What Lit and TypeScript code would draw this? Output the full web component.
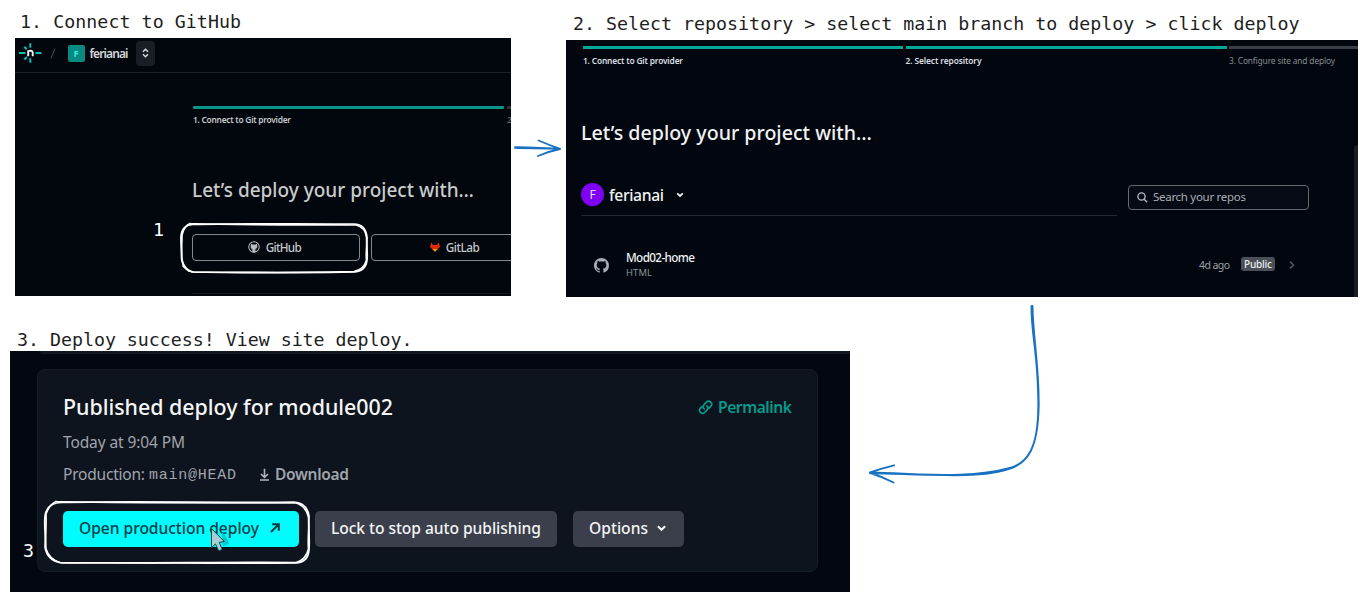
import { LitElement, html, css, svg } from "lit";
import { customElement, property } from "lit/decorators.js";

/** Text run whose tracking is adjusted so that it spans a given width. */
@customElement("fit-text")
class FitText extends LitElement {
  @property({ type: Number }) w = 0;
  @property() text = "";

  static styles = css`
    :host { display: block; flex: none; white-space: pre; }
    .run { display: inline-block; vertical-align: top; }
  `;

  updated() {
    const run = this.renderRoot.querySelector(".run") as HTMLElement;
    run.style.letterSpacing = "0px";
    const natural = run.getBoundingClientRect().width;
    const gaps = Math.max(1, this.text.length - 1);
    run.style.letterSpacing = `${(this.w - natural) / gaps}px`;
    this.style.width = `${this.w}px`;
  }

  render() {
    return html`<span class="run">${this.text}</span>`;
  }
}

const t = (text: string, w: number, cls = "") =>
  html`<fit-text class=${cls} .text=${text} .w=${w}></fit-text>`;

const octocat = svg`<path fill="currentColor" d="M8 0C3.58 0 0 3.58 0 8c0 3.54 2.29 6.53 5.47 7.59.4.07.55-.17.55-.38 0-.19-.01-.82-.01-1.49-2.01.37-2.53-.49-2.69-.94-.09-.23-.48-.94-.82-1.13-.28-.15-.68-.52-.01-.53.63-.01 1.08.58 1.23.82.72 1.21 1.87.87 2.33.66.07-.52.28-.87.51-1.07-1.78-.2-3.64-.89-3.64-3.95 0-.87.31-1.59.82-2.15-.08-.2-.36-1.02.08-2.12 0 0 .67-.21 2.2.82.64-.18 1.32-.27 2-.27s1.36.09 2 .27c1.53-1.04 2.2-.82 2.2-.82.44 1.1.16 1.92.08 2.12.51.56.82 1.27.82 2.15 0 3.07-1.87 3.75-3.65 3.95.29.25.54.73.54 1.48 0 1.07-.01 1.93-.01 2.2 0 .21.15.46.55.38A8.01 8.01 0 0 0 16 8c0-4.42-3.58-8-8-8z"/>`;

const base = css`
  :host { display: block; overflow: hidden; box-sizing: border-box; font-family: "Noto Sans", "Open Sans", sans-serif; font-weight: 500; }
  * { box-sizing: border-box; }
  svg { display: block; flex: none; }
  .row { display: flex; align-items: center; }
`;

@customElement("connect-panel")
class ConnectPanel extends LitElement {
  static styles = [base, css`
    :host { width: 496px; height: 258px; background: #02060d; color: #c6c9ca; }
    .top { height: 35px; padding: 0 0 4px 3.5px; border-bottom: 1px solid #1d2126; }
    .slash { margin-left: 8px; }
    .tile { width: 17px; height: 17px; margin-left: 12px; border-radius: 2px; background: #078a80; color: #35eee0; font-size: 8.5px; font-weight: 700; justify-content: center; }
    .team { font-size: 12px; line-height: 16px; margin: 1px 0 0 5px; color: #d5d8da; font-weight: 600; }
    .pick { width: 19px; height: 25px; margin-left: 7px; border-radius: 4px; background: #191d26; justify-content: center; }
    .body { padding-left: 177px; }
    .steps { display: grid; grid-template-columns: 311px 311px; gap: 3px; padding: 33px 0 0 1px; }
    .bar { height: 3px; margin-bottom: 5px; background: #07958a; border-radius: 1px; }
    .next { background: #2d3237; }
    .label { font-size: 8.4px; line-height: 12px; font-weight: 600; }
    .dim { color: #5c6265; }
    .title { font-size: 19px; line-height: 28px; margin-top: 50px; color: #c9cbcb; }
    .providers { display: flex; gap: 11px; margin-top: 30px; }
    .provider { flex: none; width: 168px; height: 27px; justify-content: center; gap: 5.5px; padding-bottom: 2px; border: 1px solid #84888b; border-radius: 4px; font-size: 11.7px; line-height: 16px; }
    .github { padding-right: 2px; }
    .end { height: 1px; margin-top: 32px; background: #14191e; }
  `];

  render() {
    return html`
      <div class="top row">
        <svg width="23" height="20" viewBox="0 0 23 20" fill="none">
          <path d="M0 10h6.500M16.500 10h6M11.300.3v4.500M11.300 15.200v4.500" stroke="#05bdb0" stroke-width="2"/>
          <path d="M5.300 3.800l2.400 2.400M5.300 16.500l2.600-2.600" stroke="#05bdb0" stroke-width="2.100"/>
          <path d="M9.200 13.200V7.300M9.200 8.200c2.200-.8 4.500-.8 4.500 1.300v3.700" stroke="#eef3f3" stroke-width="1.900"/>
        </svg>
        <svg class="slash" width="6" height="11"><path d="M5 .5 1 10.500" stroke="#4c5257"/></svg>
        <span class="tile row">F</span>
        ${t("ferianai", 39, "team")}
        <span class="pick row"><svg width="7" height="10" viewBox="0 0 7 10" fill="none" stroke="#d8dbde" stroke-width="1.500"><path d="M1 3.700l2.500-2.400L6 3.700M1 6.300l2.500 2.400L6 6.300"/></svg></span>
      </div>
      <div class="body">
        <div class="steps">
          <div><div class="bar"></div>${t("1. Connect to Git provider", 98, "label")}</div>
          <div><div class="bar next"></div>${t("2", 4, "label dim")}</div>
        </div>
        ${t("Let’s deploy your project with…", 282, "title")}
        <div class="providers">
          <div class="provider github row">
            <svg width="12" height="12" viewBox="-1.5 -1.5 19 19" color="#b9bcc0"><circle cx="8" cy="8" r="8.3" fill="none" stroke="currentColor" stroke-width="1.6"/><path fill="currentColor" d="M3.4 3l2.1 1h5l2.1-1 .6 3.4c.4 3-1 4.5-3 4.8l.2 5H5.7v-2.6l-2.5-1.3 2.4.1.3-1.2c-2.300-.3-3.500-1.900-3.100-4.800z"/></svg>
            ${t("GitHub", 36)}
          </div>
          <div class="provider row">
            <svg width="10" height="10" viewBox="0 0 10 10"><path fill="#e2280a" d="M1.200.2 3 2.900h4L8.800.2 10 5 5 9.600 0 5z"/><path fill="#f59b08" d="M2.300 6.900h5.400L5 9.700z"/></svg>
            ${t("GitLab", 34)}
          </div>
        </div>
        <div class="end"></div>
      </div>`;
  }
}

@customElement("repo-panel")
class RepoPanel extends LitElement {
  static styles = [base, css`
    :host { width: 792px; height: 257px; padding-left: 16px; background: #02070f; color: #f0f2f3; }
    .steps { display: grid; grid-template-columns: 320px 321px 129px; gap: 2.5px; padding: 6px 0 0 1px; }
    .bar { height: 3px; margin-bottom: 6px; background: #02a797; }
    .next { background: #3a3f46; }
    .label { font-size: 8.4px; line-height: 12px; color: #dcdfe1; font-weight: 600; }
    .dim { color: #868b90; font-weight: 400; }
    .title { font-size: 19.6px; line-height: 28px; margin-top: 52px; margin-left: -1px; }
    .tools { display: flex; align-items: flex-start; margin-top: 36px; margin-left: -1px; }
    .owner { width: 536px; height: 33px; padding-bottom: 9px; border-bottom: 1px solid #23282f; }
    .avatar { width: 23px; height: 23px; border-radius: 50%; justify-content: center; background: #7f00f5; color: #e9dcff; font-size: 12px; font-weight: 400; }
    .name { font-size: 15.7px; line-height: 22px; margin: 0 12px 0 5px; }
    .search { width: 181px; height: 25px; margin: 2px 0 0 11px; padding: 0 0 1px 8px; gap: 5px; border: 1px solid #656a70; border-radius: 4px; background: #050a14; color: #a9aeb5; font-size: 11.5px; line-height: 16px; font-weight: 400; }
    .repo { height: 98px; padding-left: 12px; }
    .mark { color: #a4abb4; margin-right: 17px; }
    .info { flex: 1; }
    .repo-name { font-size: 11.7px; line-height: 16px; margin-top: -1px; }
    .lang { font-size: 9.4px; line-height: 14px; color: #8d9298; font-weight: 400; margin-top: 1px; }
    .ago { font-size: 10.5px; line-height: 16px; color: #9ba0a6; font-weight: 400; }
    .badge { width: 34px; height: 14px; margin: 0 14px 2px 11px; border-radius: 3px; background: #4a4f58; color: #eceff1; justify-content: center; font-size: 10px; line-height: 14px; }
    .chev { margin-right: 63px; }
  `];

  render() {
    return html`
      <div class="steps">
        <div><div class="bar"></div>${t("1. Connect to Git provider", 100, "label")}</div>
        <div><div class="bar"></div>${t("2. Select repository", 76, "label")}</div>
        <div><div class="bar next"></div>${t("3. Configure site and deploy", 106, "label dim")}</div>
      </div>
      ${t("Let’s deploy your project with…", 291, "title")}
      <div class="tools">
        <div class="owner row">
          <span class="avatar row">F</span>
          ${t("ferianai", 55, "name")}
          <svg width="8" height="6" viewBox="0 0 8 6" fill="none" stroke="#eef0f2" stroke-width="1.800"><path d="M1.200 1.300l2.800 2.700 2.800-2.700"/></svg>
        </div>
        <div class="search row">
          <svg width="11" height="11" viewBox="0 0 11 11" fill="none" stroke="#b2b7bd" stroke-width="1.4"><circle cx="4.500" cy="4.500" r="3.600"/><path d="M7.200 7.200l3 3"/></svg>
          ${t("Search your repos", 93)}
        </div>
      </div>
      <div class="repo row">
        <svg class="mark" width="15" height="15" viewBox="0 0 16 16">${octocat}</svg>
        <div class="info">
          ${t("Mod02-home", 69, "repo-name")}
          ${t("HTML", 26, "lang")}
        </div>
        ${t("4d ago", 31, "ago")}
        <span class="badge row">${t("Public", 28)}</span>
        <svg class="chev" width="6" height="8" viewBox="0 0 6 8" fill="none" stroke="#4c5259" stroke-width="1.700"><path d="M1 .7 4.500 4 1 7.300"/></svg>
      </div>`;
  }
}

@customElement("deploy-panel")
class DeployPanel extends LitElement {
  static styles = [base, css`
    :host { width: 840px; height: 241px; background: #030810; color: #a0a5ad; }
    .above { height: 3px; margin-left: 30px; background: #10171f; border-radius: 0 0 0 5px; }
    .card { width: 781px; height: 203px; margin: 15px 0 0 27px; padding: 23px 25px 0; border: 1px solid #171d25; border-radius: 8px; background: #0e141d; }
    .head { display: flex; justify-content: space-between; }
    .title { font-size: 21.400px; line-height: 28px; color: #f5f6f7; }
    .link { gap: 5px; color: #049b8c; font-size: 15.600px; line-height: 22px; height: 28px; font-weight: 600; }
    .when { font-size: 15.500px; line-height: 22px; margin-top: 10px; font-weight: 400; }
    .meta { margin-top: 10px; height: 22px; font-size: 15.500px; line-height: 22px; font-weight: 400; }
    .ref { font-family: "Liberation Mono", monospace; font-size: 15px; margin: 3px 24px 0 4px; }
    .download { font-weight: 600; margin-left: 6px; }
    .actions { display: flex; gap: 16px; margin-top: 26px; }
    .button { height: 36px; padding: 0 0 2px 16px; border-radius: 5px; background: #3b3f4b; color: #f3f4f6; font-size: 15.600px; line-height: 22px; }
    .primary { width: 236px; background: #00fcfd; color: #043c46; gap: 11px; }
    .lock { width: 242px; }
    .options { width: 111px; gap: 9px; }
  `];

  render() {
    return html`
      <div class="above"></div>
      <div class="card">
        <div class="head">
          ${t("Published deploy for module002", 330, "title")}
          <div class="link row">
            <svg width="15" height="15" viewBox="0 0 15 15" fill="none" stroke="currentColor" stroke-width="1.700" stroke-linecap="round"><path d="M6.100 8.900a3 3 0 0 1 0-4.200l2.300-2.500a3 3 0 0 1 4.300 4.200l-1.600 1.700M8.900 5.900a3 3 0 0 1 0 4.200l-2.500 2.500a3 3 0 0 1-4.200-4.200l1.500-1.600"/></svg>
            ${t("Permalink", 74)}
          </div>
        </div>
        ${t("Today at 9:04 PM", 122, "when")}
        <div class="meta row">
          ${t("Production:", 82)}
          ${t("main@HEAD", 87, "ref")}
          <svg width="9" height="13" viewBox="0 0 9 13" fill="none" stroke="#b0b5bc" stroke-width="1.600"><path d="M4.500.8v8.500M1 6l3.500 3.400L8 6M0 12h9"/></svg>
          ${t("Download", 74, "download")}
        </div>
        <div class="actions">
          <div class="button primary row">
            ${t("Open production deploy", 180)}
            <svg width="10" height="10" viewBox="0 0 10 10" fill="none" stroke="currentColor" stroke-width="2"><path d="M1 9l7-7M2.300 1.200h6.500v6.500"/></svg>
          </div>
          <div class="button lock row">${t("Lock to stop auto publishing", 210)}</div>
          <div class="button options row">
            ${t("Options", 59)}
            <svg width="9" height="7" viewBox="0 0 9 7" fill="none" stroke="currentColor" stroke-width="2.100"><path d="M.9 1.200l3.600 3.600 3.600-3.600"/></svg>
          </div>
        </div>
      </div>`;
  }
}

/** Whiteboard canvas: captions, pasted screens and hand-drawn marks. */
@customElement("app-root")
class AppRoot extends LitElement {
  static styles = css`
    :host { display: block; position: relative; width: 1368px; height: 602px; overflow: hidden; background: #fff; }
    .note, .screen, .ink { position: absolute; }
    .note { font-family: "DejaVu Sans Mono", monospace; font-size: 18.300px; line-height: 24px; color: #1e1e1e; }
    .n1 { left: 20px; top: 10px; }
    .n2 { left: 573px; top: 12px; }
    .n3 { left: 17px; top: 328px; }
    .s1 { left: 15px; top: 38px; }
    .s2 { left: 566px; top: 40px; }
    .s3 { left: 10px; top: 351px; }
    .thumb { position: absolute; left: 1354px; top: 145px; width: 4px; height: 152px; background: #191e26; border-radius: 4px 0 0 0; }
    .ink { left: 0; top: 0; }
    .mark { color: #fff; }
    .m1 { left: 153px; top: 218px; }
    .m3 { left: 23px; top: 539px; }
  `;

  render() {
    return html`
      ${t("1. Connect to GitHub", 221, "note n1")}
      ${t("2. Select repository > select main branch to deploy > click deploy", 726.5, "note n2")}
      ${t("3. Deploy success! View site deploy.", 395.5, "note n3")}
      <connect-panel class="screen s1"></connect-panel>
      <repo-panel class="screen s2"></repo-panel>
      <div class="thumb"></div>
      <deploy-panel class="screen s3"></deploy-panel>
      <div class="note mark m1">1</div>
      <div class="note mark m3">3</div>
      <svg class="ink" width="1368" height="602" fill="none" stroke-linecap="round" stroke-linejoin="round">
        <g stroke="#fff" stroke-width="1.700">
          <path d="M193 224.500C240 223 310 224.500 354 224Q366 224 367 238C366 245 368 252 367 260Q366 271 355 272C300 273.500 240 272 194 272Q183 271 181.500 258C182 250 180.500 243 181 236Q182 225 193 224.500"/>
          <path d="M190 223.500C245 225.500 315 224.500 356 225Q365 227 366.500 237C367.500 246 365.500 253 366.500 260Q364 270 354 271.500C300 272.500 245 273 192 272Q184 269 182 260C181 249 182 243 182 235Q184 226 190 223.500M183 266l6 5"/>
          <path d="M61 502.500C130 501 230 503 294 502Q307 503 309 516C308 526 310 538 309 550Q308 562 297 563C220 564 130 562 62 563Q47 561 45 547C46 535 44 527 45 516Q47 503 61 502.500"/>
          <path d="M56 501.500C130 503.500 230 502.500 296 503Q306 506 308.500 517C309.500 529 307.500 538 308.500 549Q306 560 296 562.500C220 562 130 563.500 60 562.500Q49 559 46 549C45 537 46.500 527 46 514Q49 505 56 501.500"/>
        </g>
        <g stroke="#1971c2" stroke-width="1.900">
          <path d="M515 147.300C530 147 545 148.700 560 148.800M515 147.800C531 148.500 546 147.800 560 149M538.500 140.500Q549 145 560 148.800M538 156Q548 151.500 560 149"/>
          <path d="M1031.500 306C1031 330 1037 350 1038 390C1040 435 1034 459 1013 467.500C980 480 925 474 871 472.500M1032.500 306C1033 338 1039 365 1038.700 405C1038 450 1027 463 1010 468C970 479 922 474 870 473.200M894 465.300Q881 468.500 870 472.500M893.500 482.500Q882 476.500 870 473"/>
        </g>
        <path d="M222 532q6 6 7 12l-6 2z" fill="#00c9cf"/>
        <path d="M211.500 529v18.500l4-3.500 3.200 7 3.500-1.600-3-7 4.800-.8z" fill="#a9cfd3" stroke="#0c4650" stroke-width="1"/>
      </svg>`;
  }
}
